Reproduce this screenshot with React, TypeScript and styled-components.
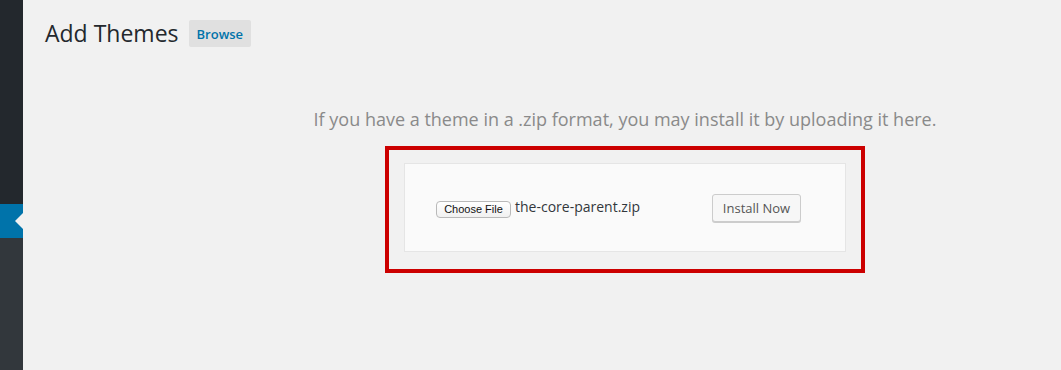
import React from "react";
import styled, { createGlobalStyle } from "styled-components";

const colors = {
  page: "#f1f1f1",
  sidebar: "#23282d",
  sidebarLower: "#32373c",
  active: "#0073aa",
  text: "#23282d",
  muted: "#8a8a8a",
  red: "#cc0000",
};

const GlobalStyle = createGlobalStyle`
  html, body {
    margin: 0;
    padding: 0;
    background: ${colors.page};
    overflow: hidden;
  }
  * {
    box-sizing: border-box;
  }
`;

const App: React.FC = () => {
  return (
    <>
      <GlobalStyle />
      <Page>
        <Sidebar>
          <SidebarTop />
          <ActiveItem>
            <Arrow />
          </ActiveItem>
          <SidebarRest />
        </Sidebar>
        <Main>
          <TitleRow>
            <Title>Add Themes</Title>
            <BrowseButton>Browse</BrowseButton>
          </TitleRow>
          <UploadSection>
            <InstallHelp>
              If you have a theme in a .zip format, you may install it by
              uploading it here.
            </InstallHelp>
            <Highlight>
              <UploadForm>
                <FileField>
                  <ChooseButton>Choose File</ChooseButton>
                  <FileName>the-core-parent.zip</FileName>
                </FileField>
                <InstallButton>Install Now</InstallButton>
              </UploadForm>
            </Highlight>
          </UploadSection>
        </Main>
      </Page>
    </>
  );
};

export default App;

const Page = styled.div`
  display: flex;
  min-height: 100vh;
  width: 100%;
`;

const Sidebar = styled.div`
  display: flex;
  flex-direction: column;
  width: 23px;
  flex-shrink: 0;
`;
const SidebarTop = styled.div`
  height: 204px;
  background: ${colors.sidebar};
`;
const ActiveItem = styled.div`
  height: 34px;
  background: ${colors.active};
  display: flex;
  align-items: center;
  justify-content: flex-end;
`;
const Arrow = styled.div`
  width: 0;
  height: 0;
  border-top: 8px solid transparent;
  border-bottom: 8px solid transparent;
  border-right: 8px solid ${colors.page};
`;
const SidebarRest = styled.div`
  flex: 1;
  background: ${colors.sidebarLower};
`;

const Main = styled.div`
  flex: 1;
  padding: 19px 0 0 22px;
  font-family: "Open Sans", "Noto Sans", sans-serif;
`;

const TitleRow = styled.div`
  display: flex;
  align-items: center;
  gap: 10px;
`;
const Title = styled.h1`
  margin: 0;
  font-size: 23px;
  font-weight: 400;
  line-height: 29px;
  color: ${colors.text};
`;
const BrowseButton = styled.span`
  display: inline-flex;
  align-items: center;
  height: 27px;
  padding: 0 8px;
  background: #e0e0e0;
  border-radius: 2px;
  color: ${colors.active};
  font-size: 13px;
  font-weight: 600;
`;

const UploadSection = styled.div`
  display: flex;
  flex-direction: column;
  align-items: center;
  width: 624px;
  margin: 59px 0 0 268px;
`;
const InstallHelp = styled.p`
  margin: 0;
  white-space: nowrap;
  font-size: 18px;
  line-height: 24px;
  color: ${colors.muted};
`;

const Highlight = styled.div`
  margin-top: 15px;
  width: 480px;
  border: 4px solid ${colors.red};
  padding: 13px 15px 17px;
`;
const UploadForm = styled.div`
  display: flex;
  align-items: center;
  width: 442px;
  padding: 30px 30px 29px;
  background: #fafafa;
  border: 1px solid #e5e5e5;
`;
const FileField = styled.div`
  display: flex;
  align-items: center;
  width: 277px;
  padding-left: 1px;
`;
const ChooseButton = styled.span`
  display: inline-flex;
  align-items: center;
  justify-content: center;
  height: 17px;
  width: 75px;
  margin-top: 2px;
  background: linear-gradient(#ffffff, #f1f1f1);
  border: 1px solid #b9b9b9;
  border-radius: 4px;
  font-family: "Liberation Sans", Arial, sans-serif;
  font-size: 11px;
  color: #111;
`;
const FileName = styled.span`
  margin-left: 4px;
  margin-top: -3px;
  font-size: 14px;
  color: #32373c;
`;
const InstallButton = styled.span`
  display: inline-flex;
  align-items: center;
  justify-content: center;
  height: 28px;
  width: 89px;
  background: #f7f7f7;
  border: 1px solid #cccccc;
  border-radius: 3px;
  box-shadow: 0 1px 0 #cccccc;
  font-size: 13px;
  color: #555555;
`;
